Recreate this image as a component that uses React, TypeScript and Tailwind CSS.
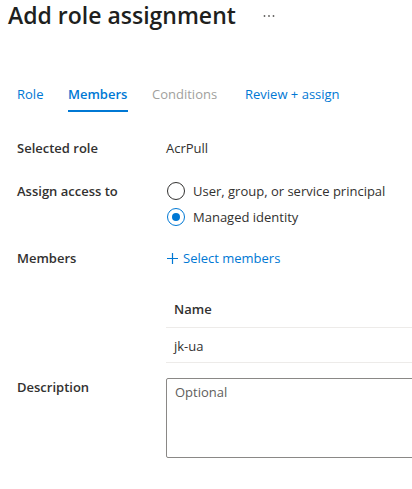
import React from 'react';

const Radio: React.FC<{ checked?: boolean; label: string }> = ({ checked, label }) => (
  <label className="flex items-center h-[20px]">
    <span
      className={`flex items-center justify-center w-[18px] h-[18px] rounded-full border ml-[1px] ${
        checked ? 'border-[#0078d4]' : 'border-[#323130]'
      }`}
    >
      {checked && <span className="w-[8px] h-[8px] rounded-full bg-[#0078d4]" />}
    </span>
    <span className="ml-[8px]">{label}</span>
  </label>
);

const App: React.FC = () => {
  return (
    <div className="w-[412px] h-[489px] overflow-hidden bg-white text-[#323130] font-['Open_Sans',sans-serif] text-[13px] leading-[20px]">
      {/* Header */}
      <div className="flex items-center h-[32px] -mt-[1px] pl-2">
        <h1 className="text-[23px] leading-[32px] font-semibold text-[#201f1e] whitespace-nowrap">Add role assignment</h1>
        <svg className="ml-[27px] mt-[2px]" width="12" height="4" viewBox="0 0 12 4" fill="#605e5c">
          <circle cx="1.5" cy="2" r="0.9" />
          <circle cx="6" cy="2" r="0.9" />
          <circle cx="10.5" cy="2" r="0.9" />
        </svg>
      </div>

      {/* Tabs */}
      <div className="flex mt-[53px] pl-[17px]">
        <div className="w-[51px]">
          <span className="text-[#0078d4]">Role</span>
        </div>
        <div className="w-[84px] flex flex-col items-start">
          <span className="font-semibold text-[#0078d4]">Members</span>
          <span className="mt-[6px] h-[2px] w-[60px] bg-[#0078d4]" />
        </div>
        <div className="w-[93px]">
          <span className="text-[#a19f9d]">Conditions</span>
        </div>
        <div>
          <span className="text-[#0078d4]">Review + assign</span>
        </div>
      </div>

      {/* Form */}
      <div className="pl-[17px] mt-[26px] grid grid-cols-[149px_1fr]">
        <div className="font-semibold">Selected role</div>
        <div>AcrPull</div>

        <div className="font-semibold mt-[23px]">Assign access to</div>
        <div className="mt-[23px] flex flex-col gap-[6px]">
          <Radio label="User, group, or service principal" />
          <Radio checked label="Managed identity" />
        </div>

        <div className="font-semibold mt-[21px]">Members</div>
        <div className="mt-[21px] flex items-center text-[#0078d4]">
          <svg className="ml-[1px]" width="11" height="11" viewBox="0 0 11 11" stroke="#0078d4" strokeWidth="1.2">
            <path d="M5.5 0v11M0 5.5h11" />
          </svg>
          <span className="ml-[5px]">Select members</span>
        </div>

        <div />
        <div className="mt-[31px] w-[300px]">
          <div className="pl-[8px] pb-[8px] font-semibold border-b border-[#edebe9]">Name</div>
          <div className="pl-[8px] pt-[8px] pb-[6px] border-b border-[#edebe9]">jk-ua</div>
        </div>

        <div className="font-semibold mt-[14px]">Description</div>
        <div className="mt-[15px]">
          <textarea
            placeholder="Optional"
            className="block w-[300px] h-[80px] border border-[#8a8886] rounded-[2px] px-[8px] py-[3px] resize-none outline-none placeholder:text-[#605e5c]"
          />
        </div>
      </div>
    </div>
  );
};

export default App;
